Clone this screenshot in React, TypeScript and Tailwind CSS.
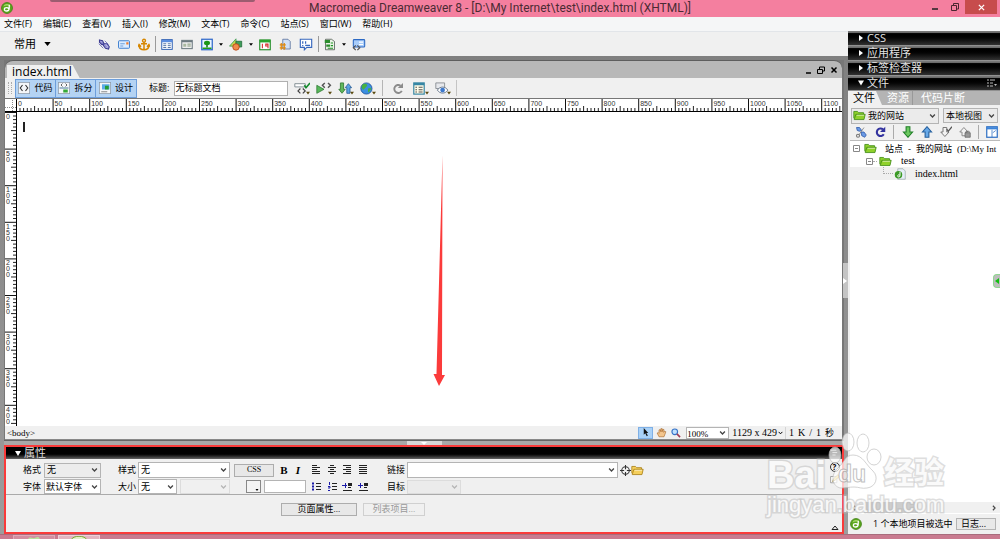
import type { ReactNode } from "react"

const ui = "font-['Open_Sans','Noto_Sans_CJK_SC',sans-serif]"
const song = "font-['Liberation_Serif','Noto_Sans_CJK_SC',serif]"

const menus = ["文件(F)", "编辑(E)", "查看(V)", "插入(I)", "修改(M)", "文本(T)", "命令(C)", "站点(S)", "窗口(W)", "帮助(H)"]

function Svg({ children, className = "h-3 w-3", box = "0 0 16 16" }: { children: ReactNode; className?: string; box?: string }) {
  return (
    <svg viewBox={box} className={`block shrink-0 ${className}`} fill="none" aria-hidden="true">
      {children}
    </svg>
  )
}

function Chevron({ className = "h-1 w-[7px]" }: { className?: string }) {
  return (
    <Svg box="0 0 8 5" className={className}>
      <path d="M1 .7 4 3.8 7 .7" stroke="currentColor" strokeWidth="1.6" />
    </Svg>
  )
}

function Logo({ className }: { className: string }) {
  return (
    <Svg className={className}>
      <circle cx="8" cy="8" r="7.3" fill="#5aa51c" stroke="#3b7d10" />
      <path d="M3 6a5.5 5.5 0 0 1 10 0c-3-2-7-2-10 0Z" fill="#a8dc6a" />
      <path d="M11 3.500v4.500c0 3-1.500 4-3.500 4S4.500 11 4.500 9.500 6 7.500 7.500 7.500 10 8.500 10.500 9" stroke="#fff" strokeWidth="1.700" />
    </Svg>
  )
}

function Folder({ className = "h-[11px] w-[13px]", fill = "#8fd12b", line = "#3e8a12" }: { className?: string; fill?: string; line?: string }) {
  return (
    <Svg box="0 2 16 13" className={className}>
      <path d="M1 12V3.500h4.500L7 5h6v2" fill={fill} stroke={line} />
      <path d="M3.500 7H15l-1.500 6.500H1.500Z" fill={fill} stroke={line} />
      <path d="M4.500 8.200h9" stroke="#fff" opacity=".7" />
    </Svg>
  )
}

type DropProps = {
  label: string
  value: string
  className: string
  tone?: string
  disabled?: boolean
  id?: string
  children?: ReactNode
}

function Drop({ label, value, className, tone = "bg-white pl-[2px]", disabled, id, children }: DropProps) {
  return (
    <span className={`relative flex ${className}`}>
      <select
        id={id}
        aria-label={label}
        disabled={disabled}
        className={`h-full w-full appearance-none border border-[#b4b4b4] text-black outline-none disabled:border-[#dcdcdc] disabled:opacity-100 ${tone}`}
      >
        <option>{value}</option>
      </select>
      {children}
      <span className={`pointer-events-none absolute inset-y-0 right-[3px] flex items-center ${disabled ? "text-[#b5b5b5]" : "text-[#444]"}`}>
        <Chevron />
      </span>
    </span>
  )
}

function Tool({ label, children, wide }: { label: string; children: ReactNode; wide?: boolean }) {
  return (
    <button aria-label={label} className="mx-1 shrink-0">
      <Svg className={wide ? "h-[13px] w-[14px]" : "h-[13px] w-3"}>{children}</Svg>
    </button>
  )
}

function Caret() {
  return (
    <span className="flex w-2 justify-center">
      <Svg box="0 0 6 4" className="h-[3px] w-1">
        <path d="M0 0h6L3 4Z" fill="#000" />
      </Svg>
    </span>
  )
}

const Sep = () => <span className="mx-px h-4 w-px shrink-0 bg-[#9a9a9a]" />

function InsertBar() {
  return (
    <div className="flex h-[25px] items-center border-t border-[#e2e5e9] bg-[#f0f0f0]">
      <button className={`ml-[14px] flex w-20 items-center gap-2 text-[11px] leading-4 ${ui}`}>
        常用
        <Svg box="0 0 8 5" className="h-1 w-[7px]">
          <path d="M0 0h8L4 5Z" fill="#000" />
        </Svg>
      </button>
      <Tool label="超级链接">
        <path d="m2 2 4 1 2 4-3 1-3-3Zm6 5 4 0 3 4-1 3-4-1-3-4Z" fill="#b7b5e8" stroke="#3d3c92" strokeWidth="1.500" />
        <path d="m4 4 8 8M1 7l6 6M9 3l5 5" stroke="#5a58ae" />
      </Tool>
      <Tool label="电子邮件链接">
        <rect x=".700" y="3" width="14.600" height="10" rx="1" fill="#dcecff" stroke="#3f7ed0" strokeWidth="1.300" />
        <path d="M3 7h6M3 10h4" stroke="#4a87cf" />
        <path d="M11 5h3v3h-3Z" fill="#ef7d32" />
      </Tool>
      <Tool label="命名锚记">
        <circle cx="8" cy="3" r="2" stroke="#d68600" strokeWidth="1.800" />
        <path d="M8 5v10M4 7h8M1.500 9c0 4 3 6 6.500 6s6.500-2 6.500-6M0 11l1.500-3L4 11M12 11l2.500-3 1.500 3" stroke="#d68600" strokeWidth="2" />
      </Tool>
      <Sep />
      <Tool label="表格">
        <rect x="1" y="1.500" width="14" height="13" fill="#fff" stroke="#2e5fb3" strokeWidth="1.300" />
        <path d="M1 3.500h14" stroke="#5b8de0" strokeWidth="3" />
        <path d="M3 7h4m2 0h4M3 9.500h4m2 0h4M3 12h4m2 0h4" stroke="#5374a8" strokeWidth="1.300" />
      </Tool>
      <Tool label="插入 Div 标签">
        <rect x="1" y="2.500" width="14" height="11" fill="#eee" stroke="#6c7a80" strokeWidth="1.400" />
        <path d="M1 4h14" stroke="#6c7a80" strokeWidth="2" />
        <path d="M3 7h4v4H3Z" fill="#a8b8a0" />
        <path d="M8.500 7.500H13M8.500 10H13" stroke="#5e7b51" />
      </Tool>
      <Tool label="图像">
        <rect x="1" y="1" width="14" height="14" fill="#e9f5ff" stroke="#2b64c8" strokeWidth="1.600" />
        <path d="M7 8h2v4H7Z" fill="#176f11" />
        <path d="M2 12h12v2H2Z" fill="#21a01b" />
        <ellipse cx="8" cy="6" rx="4" ry="3" fill="#1c9617" />
      </Tool>
      <Caret />
      <Tool label="媒体" wide>
        <path d="M0 10 8 1v9Z" fill="#c8d64a" stroke="#3f9d5b" />
        <path d="M8 4h7v7H8Z" fill="#3f9d5b" stroke="#226e3a" />
        <circle cx="8" cy="11" r="4" fill="#f08c4c" stroke="#b7410e" />
      </Tool>
      <Caret />
      <Tool label="日期">
        <rect x="1" y="2" width="14" height="13" fill="#fff" stroke="#1f8b25" strokeWidth="1.500" />
        <path d="M1 3.500h14" stroke="#2ba52f" strokeWidth="3.500" />
        <path d="M4.500 7v6M12 13V7.500H9v2.500h3" stroke="#d32828" strokeWidth="1.400" />
      </Tool>
      <Tool label="服务器端包括">
        <path d="M5 1h7l3 3v10H5Z" fill="#d2e1f6" stroke="#516a95" />
        <path d="M3 6v9M7 6v9M1 8.500h8M1 12.500h8" stroke="#e08a10" strokeWidth="1.700" />
      </Tool>
      <Tool label="注释" wide>
        <path d="M1 1.500h14v10H9l-3 3v-3H1Z" fill="#fff" stroke="#3767bd" strokeWidth="1.400" />
        <path d="M4 4v3M4 8.500V10M7.500 4v3M7 9h6" stroke="#3767bd" strokeWidth="1.500" />
      </Tool>
      <Sep />
      <Tool label="模板">
        <path d="M2 1h8l4 3v11H2Z" fill="#e7f3e4" stroke="#46504a" />
        <path d="M1 2h7v4H1Zm2 6h5v3H3Z" fill="#2a8c2c" />
        <path d="M9 6h3M9 9.500h3M5 13h7" stroke="#219126" strokeWidth="1.500" />
      </Tool>
      <Caret />
      <Tool label="标签选择器" wide>
        <rect x="1" y="2" width="14" height="9" rx="1" fill="#a9cdfa" stroke="#2c69c3" strokeWidth="1.300" />
        <path d="M8 5h5M8 8h5" stroke="#fff" strokeWidth="1.400" />
        <path d="m4 9-3 3 3 3M6 9l3 3-3 3" stroke="#555" strokeWidth="1.500" />
      </Tool>
    </div>
  )
}

// 50 ruler units in screen pixels
const unit = 36.6
const rulerFont = "font-['Liberation_Sans',sans-serif]"

function TopRuler() {
  const marks = Array.from({ length: 60 }, (_, i) => i)
  return (
    <svg className="block h-3 min-w-0 flex-1" aria-hidden="true">
      {marks.map((m) => (
        <g key={m} transform={`translate(${m * unit - 1} 0)`}>
          <path d="M.500 0v12" stroke="#111" />
          <path d="M4 9v3m3.600-3v3m3.700-3v3m3.700-3v3m3.600-5v5m3.700-3v3m3.700-3v3m3.600-3v3m3.700-3v3" stroke="#222" />
          {m < 23 && (
            <text x="2" y="7" fontSize="7" fill="#333" className={rulerFont}>
              {m * 50}
            </text>
          )}
        </g>
      ))}
    </svg>
  )
}

function SideRuler() {
  const marks = Array.from({ length: 30 }, (_, i) => i)
  return (
    <div className="relative w-3 shrink-0 overflow-hidden border-r border-black bg-white">
      <svg className="absolute inset-0 h-full w-full" aria-hidden="true">
        {marks.map((m) => (
          <g key={m} transform={`translate(0 ${m * unit})`}>
            <path d="M0 .500h12" stroke="#111" />
            <path d="M8 4h3m-3 3.600h3m-3 3.700h3m-3 3.700h3m-5 3.600h5m-3 3.700h3m-3 3.700h3m-3 3.600h3m-3 3.700h3" stroke="#222" />
            {m < 9 &&
              String(m * 50).split("").map((d, i) => (
                <text key={i} x="1" y={7 + i * 6} fontSize="7" fill="#333" className={rulerFont}>
                  {d}
                </text>
              ))}
          </g>
        ))}
      </svg>
    </div>
  )
}

function ViewButton({ label, children, last }: { label: string; children: ReactNode; last?: boolean }) {
  return (
    <button className={`flex h-[17px] w-10 items-center justify-center gap-1 bg-[#b4d3f3] text-[9px] ${last ? "" : "border-r border-[#6d9edb]"}`}>
      <Svg className="h-3 w-3">
        <rect x=".500" y=".500" width="15" height="15" fill="#f4f6f8" stroke="#8e9aa8" />
        {children}
      </Svg>
      {label}
    </button>
  )
}

function DocTool({ label, children }: { label: string; children: ReactNode }) {
  return (
    <button aria-label={label} className="mx-[3px] flex shrink-0">
      <Svg box="0 0 20 16" className="h-[13px] w-4">
        {children}
      </Svg>
    </button>
  )
}

const dot = <path d="M15 12h5l-2.500 3.500Z" fill="#5a4a10" />

function DocumentBar() {
  return (
    <div className={`flex h-[21px] items-center border-b border-[#777] bg-[#f0f0f0] ${ui}`}>
      <span className="mx-[3px] h-3 w-1 border-x border-dotted border-[#aaa]" />
      <div className="flex border border-[#6d9edb]">
        <ViewButton label="代码">
          <path d="M6 4 3 8l3 4m4-8 3 4-3 4" stroke="#333" strokeWidth="1.500" />
        </ViewButton>
        <ViewButton label="拆分">
          <path d="M6 2 4 4l2 2m4-4 2 2-2 2" stroke="#333" />
          <path d="M2 8h12" stroke="#4c7c9b" strokeWidth="1.500" />
          <path d="M7 10h6v4H7Z" fill="#35a936" />
        </ViewButton>
        <ViewButton label="设计" last>
          <path d="M4 3h10v7H4Z" fill="#5dade8" />
          <path d="M8 5h5v5H8Z" fill="#259d35" />
          <path d="M3 13h8" stroke="#666" />
        </ViewButton>
      </div>
      <label htmlFor="doc-title" className="ml-3 text-[9px]">标题:</label>
      <input
        id="doc-title"
        defaultValue="无标题文档"
        className="ml-[5px] mr-[3px] h-[15px] w-[114px] border border-[#b0b0b0] bg-white pb-[2px] text-[9px] leading-3 outline-none"
      />
      <DocTool label="没有浏览器检查错误">
        <path d="M1 2h13v4H1Z" fill="#fff" stroke="#6b7880" />
        <path d="m8 8-3 3 3 3m3-6 3 3-3 3" stroke="#444" strokeWidth="1.500" />
        <path d="m13 4 2 3 5-6" stroke="#148a2c" strokeWidth="2" />
        {dot}
      </DocTool>
      <DocTool label="验证标记">
        <path d="m1 4 9 5-9 5Z" fill="#58b85a" stroke="#2f7a34" />
        <path d="m11 1-3 3 3 3m4-6 3 3-3 3" stroke="#555" strokeWidth="1.800" />
        {dot}
      </DocTool>
      <DocTool label="文件管理">
        <path d="M3 1h4v8h2l-4 5-4-5h2Z" fill="#61b85d" stroke="#2b752c" />
        <path d="M11 14V7H9l4-5 4 5h-2v7Z" fill="#5ba4e2" stroke="#245b97" />
        {dot}
      </DocTool>
      <DocTool label="在浏览器中预览">
        <circle cx="8" cy="8" r="7" fill="#3b8fe0" stroke="#1b4e98" />
        <path d="M3 3c3-2 6-1 6 1S6 7 5 9 2 7 2 6Zm7 5 4-1c0 3-2 5-4 6Z" fill="#46b242" />
        {dot}
      </DocTool>
      <span className="ml-[3px] mr-[5px] h-4 w-px bg-[#b5b5b5]" />
      <DocTool label="刷新设计视图">
        <path d="M12 4.500a5 5 0 1 0 1.500 6.500" stroke="#8b8b8b" strokeWidth="2.400" />
        <path d="M15 1v6.500H8.500Z" fill="#8b8b8b" />
      </DocTool>
      <DocTool label="视图选项">
        <rect x="1" y="1" width="13" height="14" fill="#fffbe6" stroke="#3686a4" strokeWidth="1.500" />
        <path d="M1 2.500h13" stroke="#3686a4" strokeWidth="3" />
        <path d="M3 6.500h2m2 0h5M3 9.500h2m2 0h5M3 12.500h2m2 0h5" stroke="#555" strokeWidth="1.300" />
        {dot}
      </DocTool>
      <DocTool label="可视化助理">
        <path d="M1 1h11v7H1Z" fill="#e6e8ec" stroke="#7c8287" />
        <path d="M3 10c3-5 10-5 13 0-3 5-10 5-13 0Z" fill="#fff" stroke="#4e6179" />
        <circle cx="9.500" cy="10" r="3" fill="#3e79cc" />
        {dot}
      </DocTool>
      <span className="ml-[2px] h-4 w-px bg-[#c4c4c4]" />
    </div>
  )
}

function DocumentWindow() {
  return (
    <section className="flex min-h-0 flex-1 flex-col overflow-hidden rounded-t-lg border-t border-[#5e5e5e] bg-[#b8b8b8]">
      <header className="flex h-[17px] items-end justify-between">
        <button className={`ml-[2px] h-[13px] bg-[#f0f0f0] pl-[5px] pr-2 text-left text-[12px] leading-[13px] [clip-path:polygon(0_0,calc(100%-7px)_0,100%_100%,0_100%)] ${ui}`}>
          index.html
        </button>
        <div className="mr-1 flex h-4 items-center gap-[5px]">
          <button aria-label="最小化文档">
            <Svg box="0 0 8 8" className="h-2 w-2"><path d="M2 7h5" stroke="#000" strokeWidth="1.600" /></Svg>
          </button>
          <button aria-label="还原文档">
            <Svg box="0 0 8 8" className="h-2 w-2"><path d="M2.500 3V1h5v4H6M.500 3.500h5v4h-5Z" stroke="#000" /></Svg>
          </button>
          <button aria-label="关闭文档">
            <Svg box="0 0 8 8" className="h-2 w-2"><path d="m1.500 1.500 5 5m0-5-5 5" stroke="#000" strokeWidth="1.500" /></Svg>
          </button>
        </div>
      </header>
      <DocumentBar />
      <div className="flex border-b border-black bg-white">
        <span className="flex h-3 w-3 shrink-0 items-center justify-center border-r border-black">
          <Svg box="0 0 11 11" className="h-[11px] w-[11px]"><path d="M7.500 0v11M0 7.500h11" stroke="#888" strokeDasharray="1 1" /></Svg>
        </span>
        <TopRuler />
      </div>
      <div className="flex min-h-0 flex-1 bg-white">
        <SideRuler />
        <div className="relative flex-1">
          <span className="ml-[6px] mt-[10px] block h-[10px] w-[2px] bg-[#222]" />
          <svg viewBox="0 0 12 231" className="absolute left-[416px] top-[43px] h-[231px] w-3" aria-hidden="true">
            <path d="M9.500 0 9 220h3L6 231 .500 219H3.500Z" fill="#fb3b3b" />
          </svg>
        </div>
      </div>
      <footer className={`flex h-[14px] items-center border-b border-[#888] bg-[#f0f0f0] text-[10px] leading-3 ${song}`}>
        <button className="ml-[2px] text-[9px]">&lt;body&gt;</button>
        <div className="ml-auto flex h-full items-center">
          <button aria-label="选取工具" className="flex h-3 w-[15px] items-center justify-center border border-[#7fb0e6] bg-[#a9d1f7]">
            <Svg box="0 0 8 12" className="h-[9px] w-[6px]"><path d="M1 0v9l2-2 2 4 1.500-1-2-3.500H7Z" fill="#111" /></Svg>
          </button>
          <button aria-label="手形工具" className="ml-[3px]">
            <Svg className="h-[10px] w-[11px]">
              <path d="m4 14-3-6 2-.500 1 1V3l2-.500L7 6V1h2v5l1-4 2 .500L11.500 7 13 5l2 1-3 8Z" fill="#f3c58d" stroke="#a8682a" />
            </Svg>
          </button>
          <button aria-label="缩放工具" className="ml-1">
            <Svg className="h-[10px] w-[10px]">
              <circle cx="6" cy="6" r="4.500" fill="#bfe0ff" stroke="#3673c7" strokeWidth="1.800" />
              <path d="m9.500 9.500 5 5" stroke="#a03a55" strokeWidth="2.600" />
            </Svg>
          </button>
          <Drop label="缩放比率" value="100%" className="ml-[5px] h-3 w-[43px] text-[9px]" tone="bg-white" />
          <span className="ml-[3px]">1129 x 429</span>
          <Chevron className="ml-px mr-[2px] h-1 w-[5px]" />
          <span className="mr-[3px] h-3 w-px bg-[#d4d4d4]" />
          <span className="mr-2 flex gap-1">
            <span>1</span>
            <span>K</span>
            <span>/</span>
            <span>1</span>
            <span className="text-[9px]">秒</span>
          </span>
        </div>
      </footer>
    </section>
  )
}

function LineIcon({ label, d, extra }: { label: string; d: string; extra?: ReactNode }) {
  return (
    <button aria-label={label}>
      <Svg box="0 0 10 10" className="h-[10px] w-[10px]">
        <path d={d} stroke="#222" />
        {extra}
      </Svg>
    </button>
  )
}

function PropertiesPanel() {
  return (
    <section className={`flex h-[89px] flex-col border-2 border-[#f93b3b] bg-[#f0f0f0] text-[9px] leading-3 ${song}`}>
      <header className="flex h-3 shrink-0 items-center justify-between bg-linear-to-b from-black from-50% to-[#666]">
        <button className={`ml-[9px] flex items-center gap-[3px] text-[11px] leading-3 text-[#ddd] ${ui}`}>
          <Svg box="0 0 6 5" className="h-[5px] w-[6px]"><path d="M0 0h6L3 5Z" fill="#fff" /></Svg>
          属性
        </button>
        <button aria-label="面板选项" className="mr-1">
          <Svg box="0 0 10 10" className="h-2 w-2"><path d="M0 1.500h8M3 4.500h6M3 7.500h4" stroke="#ddd" /></Svg>
        </button>
      </header>
      <div className="flex h-9 border-b border-[#aaa] pt-[3px]">
        <div className="flex min-w-0 flex-1 flex-col gap-px pl-[17px]">
          <div className="flex h-4 items-center">
            <label htmlFor="format" className="w-[21px]">格式</label>
            <Drop id="format" label="格式" value="无" className="h-[15px] w-[57px]" tone="bg-[#ececec] pl-[2px]" />
            <label htmlFor="style" className="ml-[17px] w-5">样式</label>
            <Drop id="style" label="样式" value="无" className="h-4 w-[92px]" />
            <button className="ml-1 h-[13px] w-10 border border-[#adadad] bg-[#e8e8e8] text-[8px] leading-[10px]">CSS</button>
            <button className="ml-[5px] w-[10px] text-[11px] font-black">B</button>
            <button className="ml-[4px] mr-2 w-[10px] text-[11px] font-bold italic">I</button>
            <div className="flex w-[57px] justify-between">
              <LineIcon label="左对齐" d="M1 .500h5M1 2.500h8M1 4.500h5M1 6.500h8M1 8.500h8" />
              <LineIcon label="居中对齐" d="M3 .500h4M1 2.500h8M3 4.500h4M1 6.500h8M3 8.500h4" />
              <LineIcon label="右对齐" d="M1 .500h8M4 2.500h5M1 4.500h8M4 6.500h5M1 8.500h8" />
              <LineIcon label="两端对齐" d="M1 .500h8M1 2.500h8M1 4.500h8M1 6.500h8M1 8.500h8" />
            </div>
            <label htmlFor="link" className="ml-[19px] w-5">链接</label>
            <Drop id="link" label="链接" value="" className="h-4 w-[211px]" />
            <button aria-label="指向文件" className="ml-[2px]">
              <Svg className="h-[11px] w-[11px]">
                <circle cx="8" cy="8" r="5.500" stroke="#333" strokeWidth="1.500" />
                <path d="M8 0v6m0 4v6M0 8h6m4 0h6" stroke="#333" strokeWidth="1.500" />
              </Svg>
            </button>
            <button aria-label="浏览文件"><Folder fill="#f5cf5c" line="#a97e13" /></button>
          </div>
          <div className="flex h-[15px] items-center">
            <label htmlFor="face" className="w-[21px]">字体</label>
            <Drop id="face" label="字体" value="默认字体" className="h-[15px] w-[57px]" tone="bg-white pl-px" />
            <label htmlFor="size" className="ml-[17px] w-5">大小</label>
            <Drop id="size" label="大小" value="无" className="h-[15px] w-[39px]" />
            <Drop label="单位" value="" disabled className="ml-[3px] h-[15px] w-[50px]" tone="bg-[#f0f0f0]" />
            <button aria-label="文本颜色" className="ml-4 flex h-[13px] w-[15px] items-end justify-end border border-[#888] bg-[#f4f4f4] p-px">
              <Svg box="0 0 6 4" className="h-[2px] w-1"><path d="M0 0h6L3 4Z" fill="#000" /></Svg>
            </button>
            <input aria-label="颜色值" className="ml-[3px] mr-[5px] h-[13px] w-[42px] border border-[#b4b4b4] bg-white outline-none" />
            <div className="flex w-[57px] justify-between">
              <LineIcon label="项目列表" d="M5 1.500h5M5 4.500h5M5 7.500h5" extra={<path d="M1 1.500h2M1 4.500h2M1 7.500h2" stroke="#1a1aa8" strokeWidth="2" />} />
              <LineIcon label="编号列表" d="M5 1.500h5M5 4.500h5M5 7.500h5" extra={<path d="M2.500 0v3M1 4.500h2v1.500H1M1 8.500h2" stroke="#1a1aa8" />} />
              <LineIcon label="文本凸出" d="M6 1.500h4M6 3.500h4M6 5.500h3M1 8.500h9M6 2.500h4" extra={<path d="M0 3.500h5M3.500 1v5" stroke="#1a1aa8" />} />
              <LineIcon label="文本缩进" d="M6 1.500h4M6 3.500h4M6 5.500h3M1 8.500h9M6 2.500h4" extra={<path d="M0 3.500h5M2.500 1v5" stroke="#1a1aa8" />} />
            </div>
            <label htmlFor="target" className="ml-[19px] w-5">目标</label>
            <Drop id="target" label="目标" value="" disabled className="h-[14px] w-[54px]" tone="bg-[#ebebeb]" />
          </div>
        </div>
        <div className="mr-[2px] flex w-[11px] flex-col items-center gap-[2px]">
          <button aria-label="帮助" className={`h-[10px] w-[10px] rounded-full border border-[#333] text-[8px] font-bold leading-[8px] ${ui}`}>?</button>
          <button aria-label="快速标签编辑器">
            <Svg className="h-[10px] w-[10px]">
              <path d="M1 4h10v10H1Z" fill="#fff" stroke="#777" />
              <path d="m4 12 2-5 7-6 2 3-7 6Z" fill="#f0d467" stroke="#8a7434" />
            </Svg>
          </button>
        </div>
      </div>
      <div className="relative flex flex-1 items-start pl-[275px] pt-2">
        <button className="h-[13px] w-[76px] border border-[#adadad] bg-[#e8e8e8] text-[9px] leading-[11px]">页面属性...</button>
        <button disabled className="ml-[6px] h-[13px] w-[62px] border border-[#d0d0d0] text-[9px] leading-[11px] text-[#999]">列表项目...</button>
        <button aria-label="折叠" className="absolute bottom-[2px] right-[3px]">
          <Svg box="0 0 8 5" className="h-[5px] w-2"><path d="M1 4.500h6L4 1Z" stroke="#222" /></Svg>
        </button>
      </div>
    </section>
  )
}

function PanelHeader({ title, open }: { title: string; open?: boolean }) {
  return (
    <header className="flex h-[15px] items-center justify-between border-b border-[#909090] bg-linear-to-b from-[#777] from-10% via-black via-20% to-[#333]">
      <button className="ml-[10px] flex items-center gap-[3px] text-[11px] leading-3 text-[#e4e4e4]">
        <Svg box="0 0 6 6" className="h-[6px] w-[6px]">
          <path d={open ? "M0 .500h6L3 5.500Z" : "M1 0v6l4-3Z"} fill="#fff" />
        </Svg>
        {title}
      </button>
      {open && (
        <button aria-label="面板选项" className="mr-[3px]">
          <Svg box="0 0 10 8" className="h-2 w-[10px]">
            <path d="M0 1h2m1 0h5M0 4h2m1 0h3M0 7h2m1 0h3" stroke="#bbb" />
            <path d="M7 5h3L8.500 7Z" fill="#bbb" />
          </Svg>
        </button>
      )}
    </header>
  )
}

function SideTool({ label, children, className = "mr-[7px]" }: { label: string; children: ReactNode; className?: string }) {
  return (
    <button aria-label={label} className={`shrink-0 ${className}`}>
      <Svg>{children}</Svg>
    </button>
  )
}

const arrowDown = "M5.500 1h5v7H14l-6 7-6-7h3.500Z"
const arrowUp = "M5.500 15h5V8H14L8 1 2 8h3.500Z"

function Minus() {
  return (
    <Svg box="0 0 7 7" className="h-[7px] w-[7px]">
      <path d="M.500.500h6v6h-6ZM2 3.500h3" stroke="#888" />
    </Svg>
  )
}

function SidePanels() {
  return (
    <aside className={`flex w-[152px] shrink-0 flex-col bg-[#f0f0f0] ${ui}`}>
      <PanelHeader title="CSS" />
      <PanelHeader title="应用程序" />
      <PanelHeader title="标签检查器" />
      <PanelHeader title="文件" open />
      <div className="flex h-[14px] items-center bg-[#b4b4b4] text-[11px] leading-[14px] text-white">
        <button className="mr-[5px] w-[34px] bg-[#f0f0f0] pl-[5px] text-left text-black [clip-path:polygon(0_0,28px_0,100%_100%,0_100%)]">文件</button>
        <button className="w-[26px] border-r border-[#999] text-left">资源</button>
        <button className="ml-2">代码片断</button>
      </div>
      <div className="mt-[3px] flex gap-1 px-[3px] pr-[2px] text-[9px]">
        <Drop label="站点" value="我的网站" className="h-4 w-[88px] items-center" tone="bg-[#ebebeb] pl-[16px]">
          <span className="pointer-events-none absolute left-[2px] top-[2px]"><Folder /></span>
        </Drop>
        <Drop label="视图" value="本地视图" className="h-[15px] min-w-0 flex-1" tone="bg-[#ebebeb] pl-[2px]" />
      </div>
      <div className="flex h-4 items-center overflow-hidden pl-[7px]">
        <SideTool label="连接到远端主机">
          <circle cx="4" cy="13" r="2" stroke="#777" strokeWidth="1.500" />
          <path d="m2 2 4 0 3 4-3 1-3-1ZM8 8l4 0 3 4-2 3-4-2Z" fill="#6a9ae5" stroke="#2853a5" />
          <path d="m12 2-7 10" stroke="#777" />
        </SideTool>
        <SideTool label="刷新">
          <path d="M12 4.500a5 5 0 1 0 1 6.500" stroke="#32329e" strokeWidth="2.800" />
          <path d="M15 1v7H8Z" fill="#32329e" />
        </SideTool>
        <span className="mr-2 h-[14px] w-px bg-[#aaa]" />
        <SideTool label="获取文件"><path d={arrowDown} fill="#6cc95f" stroke="#23812a" strokeWidth="1.500" /></SideTool>
        <SideTool label="上传文件"><path d={arrowUp} fill="#67a9e8" stroke="#27619f" strokeWidth="1.500" /></SideTool>
        <SideTool label="取出文件">
          <path d="M4 2h5v6h3l-5.500 6L1 8h3Z" fill="#f2f2f2" stroke="#777" strokeWidth="1.300" />
          <path d="m9 4 2 3 5-6" stroke="#555" strokeWidth="1.600" />
        </SideTool>
        <SideTool label="存回文件" className="mr-[7px]">
          <path d="M4 13h5V8h3L6.500 2 1 8h3Z" fill="#f2f2f2" stroke="#888" strokeWidth="1.300" />
          <path d="M8 9h7v6H8Z" fill="#999" stroke="#666" />
          <path d="M9.500 9V7h4v2" stroke="#666" />
        </SideTool>
        <span className="mr-[7px] h-[14px] w-px bg-[#aaa]" />
        <SideTool label="展开以显示本地和远端站点" className="">
          <rect x="1" y="1" width="14" height="14" fill="#fff" stroke="#2b6dc2" strokeWidth="1.600" />
          <path d="M1 3h14" stroke="#3b83d9" strokeWidth="3" />
          <path d="M8 5v10m1-6 4-3" stroke="#2b6dc2" />
        </SideTool>
      </div>
      <ul className={`ml-[2px] flex-1 overflow-hidden whitespace-nowrap border-t border-[#bbb] bg-white pt-px text-[9px] leading-3 ${song}`}>
        <li className="flex h-[13px] items-center pl-[3px]">
          <Minus />
          <span className="ml-1"><Folder /></span>
          <span className="ml-2 flex gap-[5px]">
            <span>站点</span>
            <span>-</span>
            <span>我的网站</span>
            <span>(D:\My Int</span>
          </span>
        </li>
        <li className="flex h-3 items-center pl-4">
          <Minus />
          <span className="w-1 border-t border-dotted border-[#aaa]" />
          <span className="ml-[2px]"><Folder /></span>
          <span className="ml-[9px] text-[10px]">test</span>
        </li>
        <li className="flex h-[13px] items-center bg-[#f0f0f0] pl-[33px] text-[10px]">
          <span className="mb-[6px] h-[7px] w-[10px] border-b border-l border-dotted border-[#aaa]" />
          <Svg className="ml-px h-3 w-3">
            <path d="M5 1h7l3 3v11H5Z" fill="#e6eef8" stroke="#9aa" />
            <circle cx="6" cy="9" r="5" fill="#3c9a27" />
            <path d="M8 5v5c0 3-4 2-3 0s3 0 3 0" stroke="#fff" strokeWidth="1.300" />
          </Svg>
          <span className="ml-[9px]">index.html</span>
        </li>
      </ul>
      <div className="flex h-[11px] items-center px-1 text-[#444]">
        <Svg box="0 0 5 8" className="h-[6px] w-1"><path d="M4 1 1 4l3 3" stroke="currentColor" strokeWidth="1.500" /></Svg>
        <span className="ml-2 h-full w-[54px] bg-[#cdcdcd]" />
        <Svg box="0 0 5 8" className="ml-auto h-[6px] w-1"><path d="m1 1 3 3-3 3" stroke="currentColor" strokeWidth="1.500" /></Svg>
      </div>
      <footer className="flex h-[21px] items-center border-t border-white pl-[2px] pr-1 text-[9px] leading-3">
        <Logo className="h-3 w-3" />
        <span className="ml-[11px] mr-auto">1 个本地项目被选中</span>
        <button className="h-3 w-10 border border-[#b4b4b4] bg-[#e8e8e8] pr-[5px] leading-[10px]">日志...</button>
      </footer>
    </aside>
  )
}

function Watermark() {
  const outline = "[-webkit-text-stroke:3px_rgba(188,188,188,0.55)] [paint-order:stroke_fill]"
  return (
    <div className="pointer-events-none absolute bottom-[22px] right-[53px] w-[180px] select-none font-['Liberation_Sans','Noto_Sans_CJK_SC',sans-serif] text-[#fafafa] opacity-90">
      <div className="flex items-end">
        <span className={`w-[57px] text-[38px] font-bold leading-9 ${outline}`}>Bai</span>
        <svg viewBox="0 0 60 58" className="mb-[3px] h-[58px] w-[60px] shrink-0" aria-hidden="true">
          <g fill="#fff" fillOpacity=".8" stroke="#bbb" strokeOpacity=".7">
            <ellipse cx="11" cy="23" rx="6" ry="8" />
            <ellipse cx="24" cy="10" rx="6" ry="9" />
            <ellipse cx="39" cy="11" rx="6" ry="9" />
            <ellipse cx="50" cy="25" rx="7" ry="8" />
            <path d="M29 23c-8 0-9 8-15 13-8 7-6 19 3 20 5 0 8-1 13-1s8 2 13 1c9-1 12-11 6-17-7-6-10-16-20-16Z" />
          </g>
          <text x="14" y="50" fontSize="23" fontWeight="700" fill="#fff" stroke="#bbb">du</text>
        </svg>
        <span className={`text-[30px] font-bold leading-10 ${outline}`}>经验</span>
      </div>
      <p className={`text-[22px] leading-6 ${outline}`}>jingyan.baidu.com</p>
    </div>
  )
}

export default function App() {
  return (
    <div className={`relative flex min-h-screen flex-col overflow-hidden bg-[#f0f0f0] text-black ${ui}`}>
      <header className="grid h-[17px] grid-cols-[80px_1fr_80px] bg-[#f47f9f]">
        <span className="pl-px pt-[2px]"><Logo className="h-3 w-3" /></span>
        <h1 className="text-center font-['Roboto',sans-serif] text-[12px] leading-[17px] text-[#4a2b33]">
          Macromedia Dreamweaver 8 - [D:\My Internet\test\index.html (XHTML)]
        </h1>
        <div className="flex justify-end pr-[3px]">
          <button aria-label="最小化" className="flex h-[14px] w-5 items-center justify-center">
            <Svg box="0 0 8 8" className="h-2 w-2"><path d="M1 6h6" stroke="#222" strokeWidth="1.500" /></Svg>
          </button>
          <button aria-label="还原" className="flex h-[14px] w-5 items-center justify-center">
            <Svg box="0 0 8 8" className="h-2 w-2"><path d="M2.500 2V.500h5V6H6M.500 2.500h5v5h-5Z" stroke="#4a2630" /></Svg>
          </button>
          <button aria-label="关闭" className="flex h-[14px] w-8 items-center justify-center bg-[#c74c4c]">
            <Svg box="0 0 8 8" className="h-[7px] w-[7px]"><path d="m1 1 6 6m0-6L1 7" stroke="#fff" strokeWidth="1.500" /></Svg>
          </button>
        </div>
      </header>
      <span className="absolute left-[50px] top-0 h-[2px] w-[205px] rounded-b bg-[#9c5c70]" />
      <nav className="flex h-[14px] items-center gap-[11px] bg-[#f5f6f7] pl-1 text-[9px] leading-[14px]">
        {menus.map((m) => (
          <button key={m}>{m}</button>
        ))}
      </nav>
      <main className="flex flex-1">
        <div className="flex min-w-0 flex-1 flex-col">
          <InsertBar />
          <div className="relative flex flex-1 flex-col bg-linear-to-b from-[#808080] to-[#9d9d9d] pl-1 pr-1 pt-1">
            <div className="flex flex-1 flex-col border-b border-[#666] bg-[#777] pl-px pr-[2px]">
              <DocumentWindow />
            </div>
            <div className="flex h-1 justify-center bg-[#a8a8a8]">
              <span className="flex w-[35px] justify-center bg-[#d8d8d8]">
                <Svg box="0 0 6 4" className="h-1 w-[6px]"><path d="M0 1h6L3 4Z" fill="#fff" /></Svg>
              </span>
            </div>
            <PropertiesPanel />
            <span className="absolute right-0 top-[207px] flex h-[35px] w-[5px] items-center bg-[#c4c4c4]">
              <Svg box="0 0 4 6" className="h-[6px] w-1"><path d="M0 0v6l4-3Z" fill="#fff" /></Svg>
            </span>
          </div>
        </div>
        <SidePanels />
      </main>
      <footer className="flex h-[5px] gap-[3px] border-t border-[#a86d7d] bg-[#c97b90] pl-[13px]">
        <span className="flex w-[42px] justify-center overflow-hidden border border-b-0 border-[#dfa9b8] bg-[#d28fa1]">
          <Svg box="0 0 14 4" className="h-1 w-[14px]"><path d="M1 4c0-3 3-3 5-2s6-4 7 2Z" fill="#b9df9d" /></Svg>
        </span>
        <span className="flex w-[42px] justify-center overflow-hidden border border-b-0 border-[#efd0d8] bg-[#e2b6c2]">
          <Svg box="0 0 18 4" className="h-1 w-[18px]"><path d="M1 4c2-5 14-5 16 0Z" fill="#e3f1c9" stroke="#79a833" /></Svg>
        </span>
      </footer>
      <button aria-label="展开侧栏" className="absolute right-0 top-[274px] flex h-[14px] w-[7px] items-center justify-center rounded-l-sm border border-r-0 border-[#8fd58f] bg-[#bdbdbd]">
        <Svg box="0 0 4 6" className="h-[6px] w-1"><path d="M4 0v6L0 3Z" fill="#10c010" /></Svg>
      </button>
      <Watermark />
    </div>
  )
}
